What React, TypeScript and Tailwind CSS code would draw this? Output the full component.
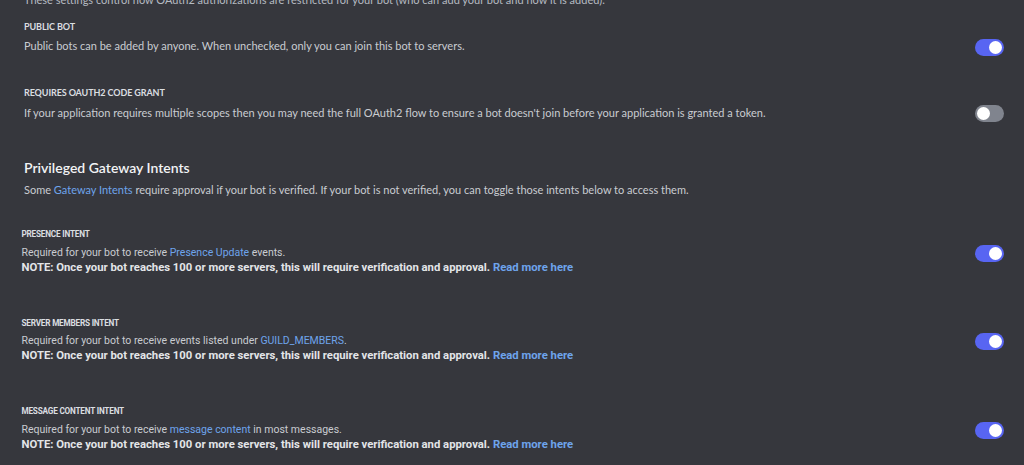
import React from "react";

type Intent = {
  label: string;
  before: string;
  link: string;
  after: string;
};

const intents: Intent[] = [
  { label: "Presence Intent", before: "Required for your bot to receive ", link: "Presence Update", after: " events." },
  { label: "Server Members Intent", before: "Required for your bot to receive events listed under ", link: "GUILD_MEMBERS", after: "." },
  { label: "Message Content Intent", before: "Required for your bot to receive ", link: "message content", after: " in most messages." },
];

function Toggle({ on }: { on: boolean }) {
  return (
    <div
      className={`flex h-[17px] w-[29px] shrink-0 items-center rounded-full px-[2px] ${
        on ? "justify-end bg-[#5865f2]" : "justify-start bg-[#80848e]"
      }`}
    >
      <div className="h-[13px] w-[13px] rounded-full bg-white" />
    </div>
  );
}

export default function App() {
  return (
    <div className="h-[465px] w-full overflow-hidden bg-[#36373d] pl-6 pr-5 font-['Lato','Noto_Sans',sans-serif]">
      <p className="-mt-[8px] text-[11px] leading-[16px] text-[#b5bac1]">
        These settings control how OAuth2 authorizations are restricted for your bot (who can add your bot and how it is added).
      </p>

      <div className="mt-[13px] flex items-end justify-between">
        <div>
          <h3 className="text-[9px] font-bold uppercase leading-[12px] tracking-[-0.1px] text-[#dbdee1]">Public Bot</h3>
          <p className="mt-[5px] text-[11px] leading-[16px] text-[#c9ccd1]">
            Public bots can be added by anyone. When unchecked, only you can join this bot to servers.
          </p>
        </div>
        <div className="-mb-[1.5px]">
          <Toggle on />
        </div>
      </div>

      <div className="mt-[33px] flex items-end justify-between">
        <div>
          <h3 className="text-[9px] font-bold uppercase leading-[12px] tracking-[-0.1px] text-[#dbdee1]">
            Requires OAuth2 Code Grant
          </h3>
          <p className="mt-[6px] text-[11px] leading-[16px] text-[#c9ccd1]">
            If your application requires multiple scopes then you may need the full OAuth2 flow to ensure a bot doesn't join before your application is granted a token.
          </p>
        </div>
        <div className="-mb-[1px]">
          <Toggle on={false} />
        </div>
      </div>

      <h2 className="mt-[37px] text-[14px] font-semibold leading-[20px] text-[#f2f3f5]">Privileged Gateway Intents</h2>
      <p className="mt-[4px] text-[11px] leading-[16px] text-[#c9ccd1]">
        Some <span className="text-[#6ea4ec]">Gateway Intents</span> require approval if your bot is verified. If your bot is not
        verified, you can toggle those intents below to access them.
      </p>

      <div className="-ml-[2.5px] mt-[30px] flex flex-col gap-[42px] font-['Roboto','Noto_Sans',sans-serif]">
        {intents.map((it) => (
          <div key={it.label} className="flex items-center justify-between">
            <div>
              <h3 className="text-[8.2px] font-bold uppercase leading-[12px] tracking-[-0.2px] text-[#dbdee1]">
                {it.label}
              </h3>
              <p className="mt-[4.5px] text-[10.5px] leading-[15px] text-[#c9ccd1]">
                {it.before}
                <span className="text-[#6ea4ec]">{it.link}</span>
                {it.after}
              </p>
              <p className="text-[11.3px] font-bold leading-[15px] text-[#e3e5e8]">
                NOTE: Once your bot reaches 100 or more servers, this will require verification and approval.{" "}
                <span className="text-[#6ea4ec]">Read more here</span>
              </p>
            </div>
            <div className="mt-[4px] ml-[2.5px]">
              <Toggle on />
            </div>
          </div>
        ))}
      </div>
    </div>
  );
}
